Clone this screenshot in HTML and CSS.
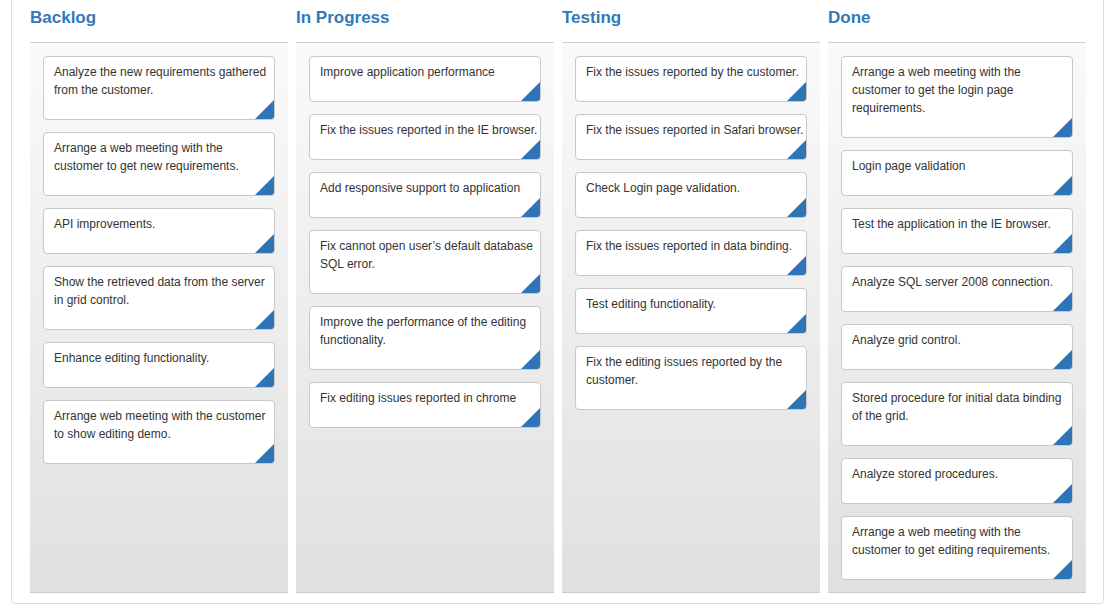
FILE: index.html
```html
<!DOCTYPE html>
<html>
<head>
<meta charset="utf-8">
<link rel="stylesheet" href="styles.css">
</head>
<body>
<div class="board">
  <div class="column">
    <div class="col-head">Backlog</div>
    <div class="col-body">
      <div class="card">Analyze the new requirements gathered from the customer.</div>
      <div class="card">Arrange a web meeting with the customer to get new requirements.</div>
      <div class="card">API improvements.</div>
      <div class="card">Show the retrieved data from the server in grid control.</div>
      <div class="card">Enhance editing functionality.</div>
      <div class="card">Arrange web meeting with the customer to show editing demo.</div>
    </div>
  </div>
  <div class="column">
    <div class="col-head">In Progress</div>
    <div class="col-body">
      <div class="card">Improve application performance</div>
      <div class="card">Fix the issues reported in the IE browser.</div>
      <div class="card">Add responsive support to application</div>
      <div class="card">Fix cannot open user’s default database SQL error.</div>
      <div class="card">Improve the performance of the editing functionality.</div>
      <div class="card">Fix editing issues reported in chrome</div>
    </div>
  </div>
  <div class="column">
    <div class="col-head">Testing</div>
    <div class="col-body">
      <div class="card">Fix the issues reported by the customer.</div>
      <div class="card">Fix the issues reported in Safari browser.</div>
      <div class="card">Check Login page validation.</div>
      <div class="card">Fix the issues reported in data binding.</div>
      <div class="card">Test editing functionality.</div>
      <div class="card">Fix the editing issues reported by the customer.</div>
    </div>
  </div>
  <div class="column">
    <div class="col-head">Done</div>
    <div class="col-body">
      <div class="card">Arrange a web meeting with the customer to get the login page requirements.</div>
      <div class="card">Login page validation</div>
      <div class="card">Test the application in the IE browser.</div>
      <div class="card">Analyze SQL server 2008 connection.</div>
      <div class="card">Analyze grid control.</div>
      <div class="card">Stored procedure for initial data binding of the grid.</div>
      <div class="card">Analyze stored procedures.</div>
      <div class="card">Arrange a web meeting with the customer to get editing requirements.</div>
    </div>
  </div>
</div>
</body>
</html>
```
FILE: styles.css
```css
html, body {
  margin: 0;
  padding: 0;
  background: #ffffff;
  overflow: hidden;
}
body {
  font-family: "Liberation Sans", Arial, sans-serif;
  color: #333333;
}
.board {
  box-sizing: border-box;
  width: 1093px;
  margin: -10px 0 0 11px;
  border: 1px solid #dddddd;
  border-radius: 4px;
  padding: 17px 17px 10px 18px;
  display: flex;
  gap: 8px;
  align-items: stretch;
}
.column {
  width: 258px;
  display: flex;
  flex-direction: column;
}
.col-head {
  font-size: 17px;
  font-weight: bold;
  line-height: 19px;
  color: #3179b8;
  padding: 0 0 15px 0;
  border-bottom: 1px solid #d0d0d0;
}
.col-body {
  flex: 1;
  padding: 13px 13px 12px 13px;
  background: linear-gradient(#fafafa, #e0e0e0);
  border-bottom: 1px solid #cccccc;
  display: flex;
  flex-direction: column;
  gap: 12px;
}
.card {
  position: relative;
  background: #ffffff;
  border: 1px solid #c8c8c8;
  border-radius: 4px;
  padding: 6px 2px 20px 10px;
  font-size: 12px;
  line-height: 18px;
  color: #333333;
}
.card::after {
  content: "";
  position: absolute;
  right: 0;
  bottom: 0;
  width: 0;
  height: 0;
  border-style: solid;
  border-width: 0 0 19px 19px;
  border-color: transparent transparent #2f74b5 transparent;
  border-bottom-right-radius: 3px;
}
```
